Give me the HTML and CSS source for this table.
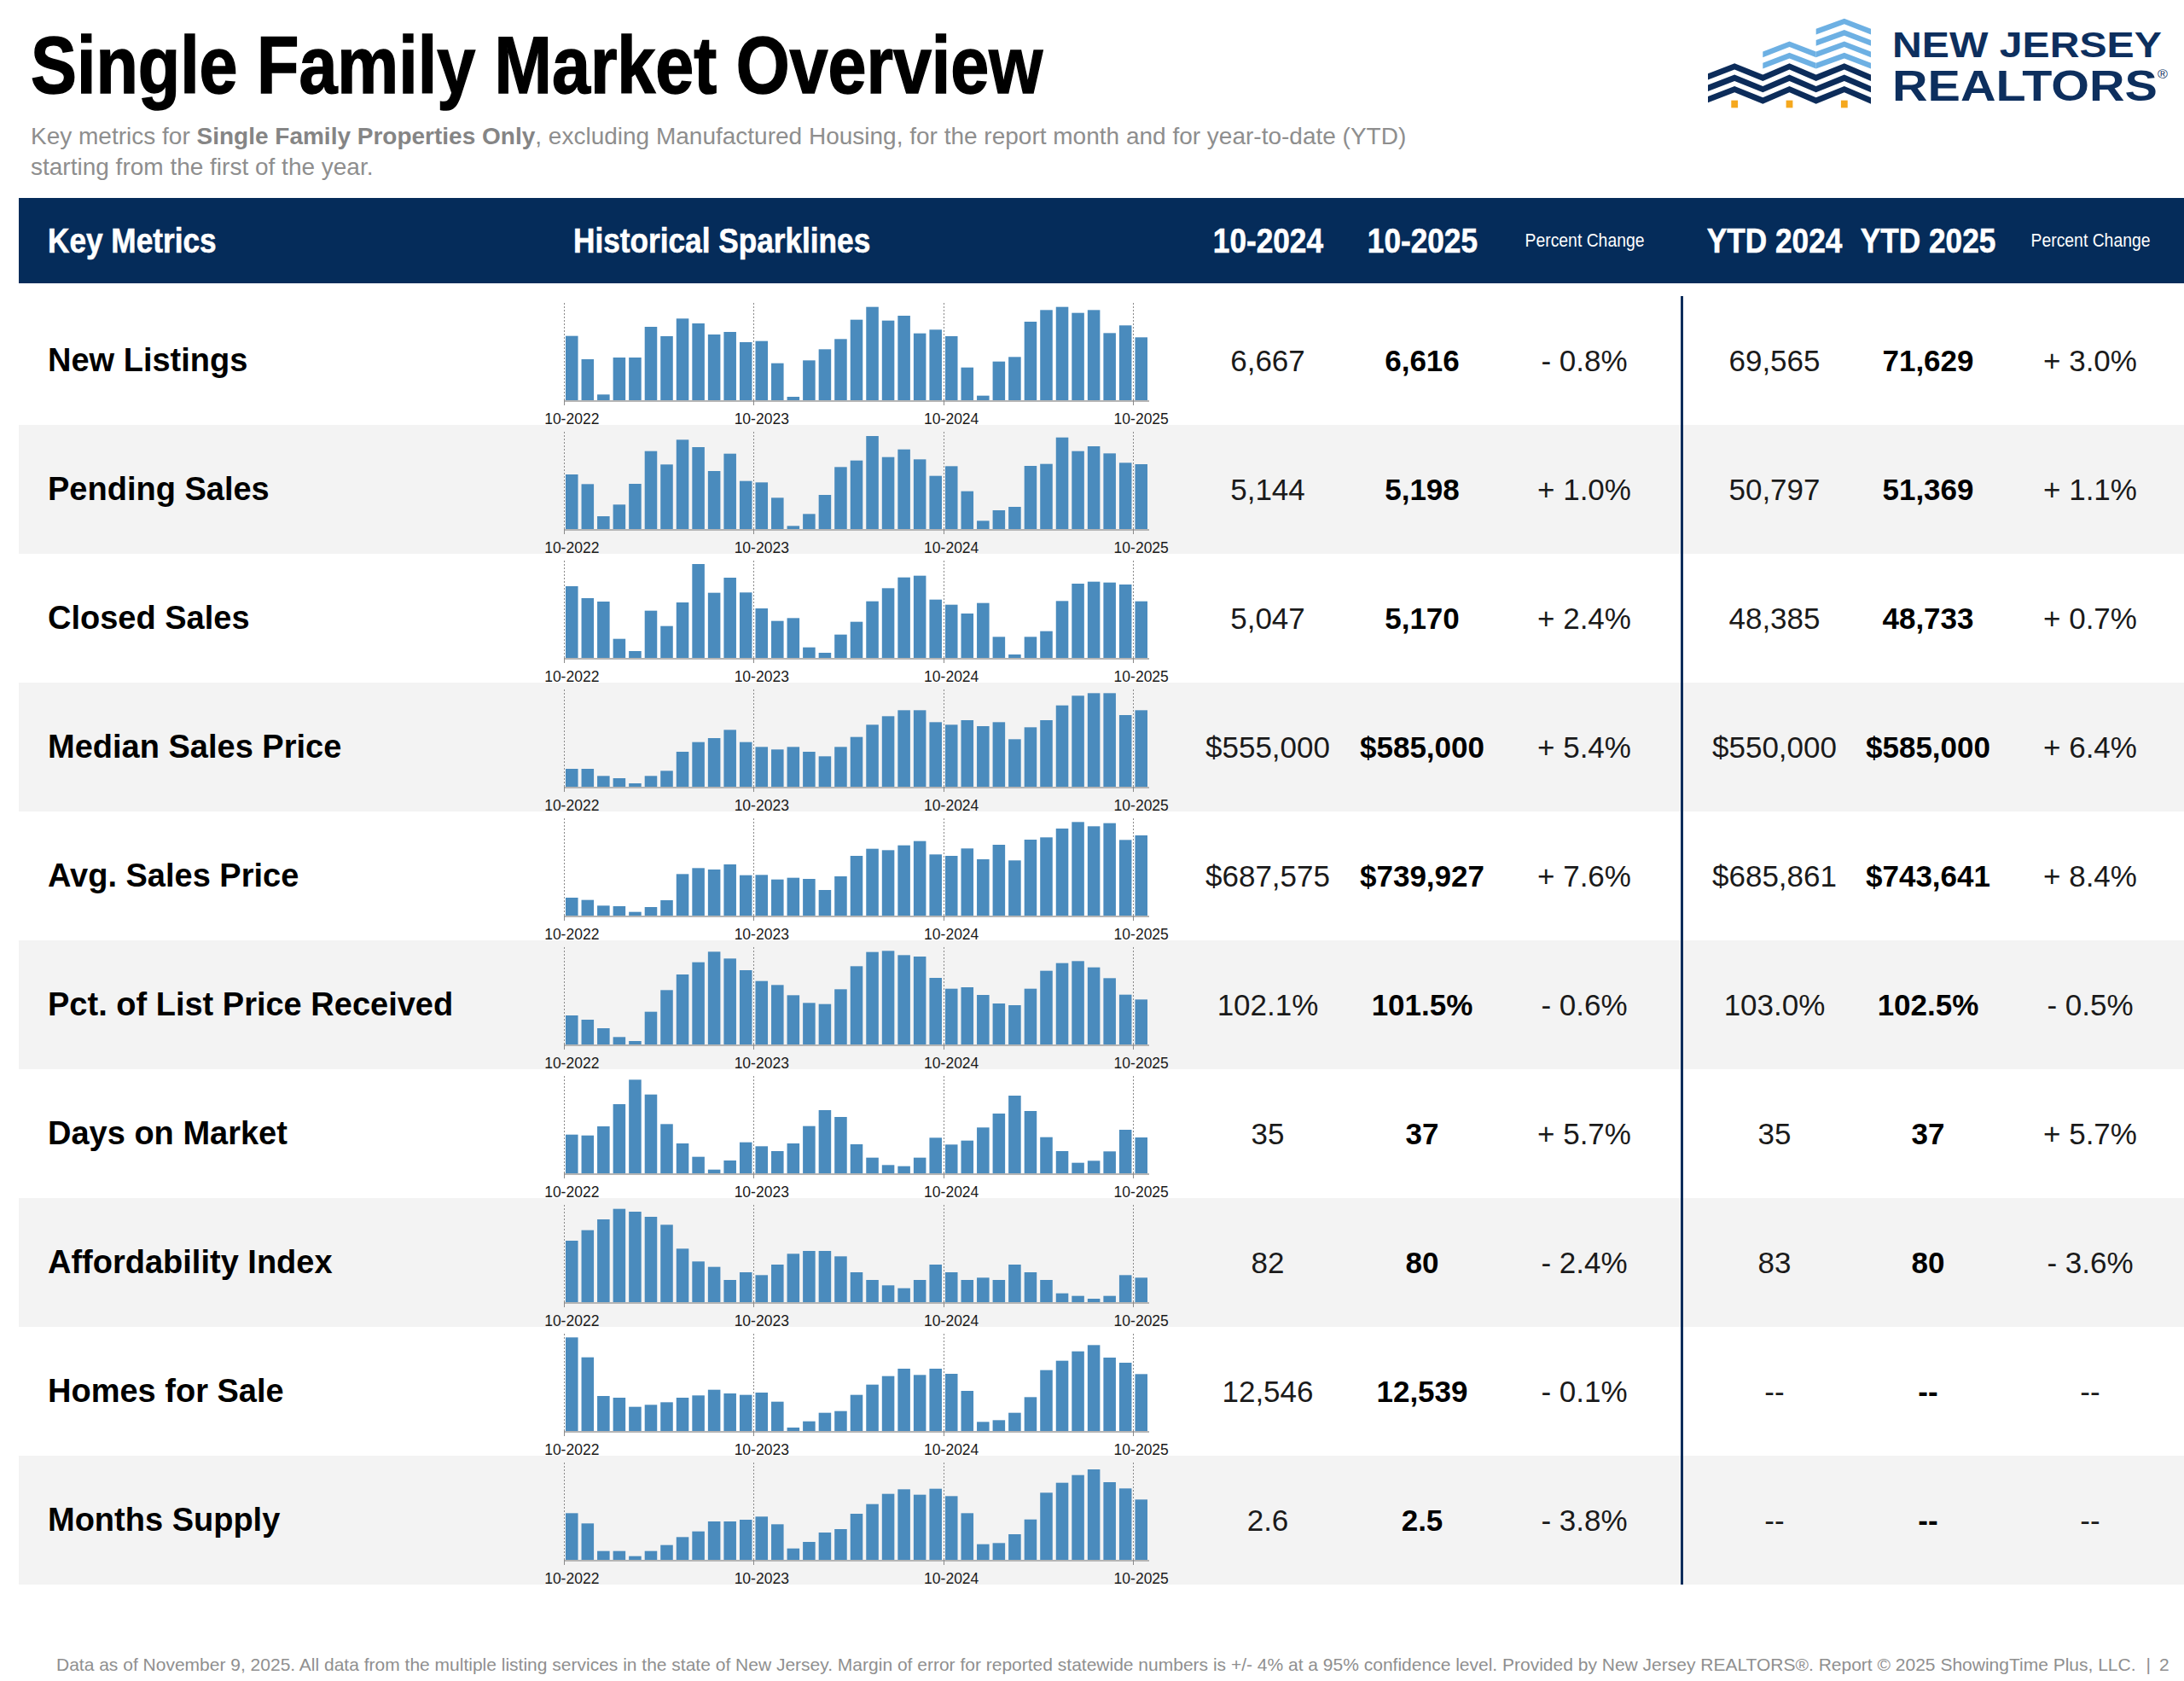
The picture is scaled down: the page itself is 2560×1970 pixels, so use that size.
FILE: index.html
```html
<!DOCTYPE html>
<html lang="en">
<head>
<meta charset="utf-8">
<title>Single Family Market Overview</title>
<link rel="stylesheet" href="styles.css">
</head>
<body>
<header class="top">
  <div class="titles">
    <h1 class="title"><span class="title-text">Single Family Market Overview</span></h1>
    <p class="subtitle">Key metrics for <b>Single Family Properties Only</b>, excluding Manufactured Housing, for the report month and for year-to-date (YTD)<br>starting from the first of the year.</p>
  </div>
  <div class="logo">
    <svg class="logo-mark" viewBox="135 60 490 320" preserveAspectRatio="none" aria-hidden="true">
      <g class="lm-light">
        <polygon points="460,101 545,65 625,101 625,121 545,85 460,121"/>
        <polygon points="460,141 545,105 625,141 625,161 545,125 460,161"/>
        <polygon points="460,181 545,145 625,181 625,201 545,165 460,201"/>
        <polygon points="460,221 545,185 625,221 625,241 545,205 460,241"/>
        <polygon points="300,181 380,145 460,181 460,201 380,165 300,201"/>
        <polygon points="300,221 380,185 460,221 460,241 380,205 300,241"/>
      </g>
      <g class="lm-dark">
        <polygon points="135,258 215,222 300,262 380,222 460,262 545,222 625,262 625,284 545,244 460,284 380,244 300,284 215,244 135,280"/>
        <polygon points="135,298 215,262 300,302 380,262 460,302 545,262 625,302 625,324 545,284 460,324 380,284 300,324 215,284 135,320"/>
        <polygon points="135,338 215,302 300,342 380,302 460,342 545,302 625,342 625,364 545,324 460,364 380,324 300,364 215,324 135,360"/>
      </g>
      <g class="lm-gold">
        <rect x="205" y="352" width="20" height="26"/>
        <rect x="370" y="352" width="20" height="26"/>
        <rect x="535" y="352" width="20" height="26"/>
      </g>
    </svg>
    <div class="logo-text">
      <span class="logo-line1">NEW JERSEY</span>
      <span class="logo-line2">REALTORS<sup class="reg">®</sup></span>
    </div>
  </div>
</header>

<section class="metrics">
  <div class="thead grid">
    <div class="th th-left th-key"><span>Key Metrics</span></div>
    <div class="th th-left th-spark"><span>Historical Sparklines</span></div>
    <div class="th"><span>10-2024</span></div>
    <div class="th"><span>10-2025</span></div>
    <div class="th th-small"><span>Percent Change</span></div>
    <div></div><div></div><div></div>
    <div class="th"><span>YTD 2024</span></div>
    <div class="th"><span>YTD 2025</span></div>
    <div class="th th-small"><span>Percent Change</span></div>
  </div>

  <div class="tbody">
    <div class="row grid">
      <div class="label">New Listings</div>
      <div class="spark" data-values="226,144,20,150,150,258,225,287,270,231,240,204,208,130,12,140,179,215,283,328,280,297,235,248,225,115,16,136,152,276,317,328,307,317,236,263,221"></div>
      <div class="val">6,667</div>
      <div class="val strong">6,616</div>
      <div class="val">- 0.8%</div>
      <div></div><div class="sep"></div><div></div>
      <div class="val">69,565</div>
      <div class="val strong">71,629</div>
      <div class="val">+ 3.0%</div>
    </div>
    <div class="row grid">
      <div class="label">Pending Sales</div>
      <div class="spark" data-values="192,158,45,86,159,274,227,314,288,204,265,169,164,110,11,53,120,218,241,327,253,280,245,187,221,133,29,66,78,222,229,322,274,291,266,233,228"></div>
      <div class="val">5,144</div>
      <div class="val strong">5,198</div>
      <div class="val">+ 1.0%</div>
      <div></div><div class="sep"></div><div></div>
      <div class="val">50,797</div>
      <div class="val strong">51,369</div>
      <div class="val">+ 1.1%</div>
    </div>
    <div class="row grid">
      <div class="label">Closed Sales</div>
      <div class="spark" data-values="252,210,198,67,24,166,112,195,330,229,282,230,174,130,140,37,18,82,127,199,245,283,289,205,187,156,193,74,12,74,94,200,261,268,265,258,199"></div>
      <div class="val">5,047</div>
      <div class="val strong">5,170</div>
      <div class="val">+ 2.4%</div>
      <div></div><div class="sep"></div><div></div>
      <div class="val">48,385</div>
      <div class="val strong">48,733</div>
      <div class="val">+ 0.7%</div>
    </div>
    <div class="row grid">
      <div class="label">Median Sales Price</div>
      <div class="spark" data-values="63,63,38,30,12,38,56,123,157,171,200,157,140,131,140,123,107,140,175,218,248,269,269,227,218,234,213,227,167,209,234,286,320,329,329,252,269"></div>
      <div class="val">$555,000</div>
      <div class="val strong">$585,000</div>
      <div class="val">+ 5.4%</div>
      <div></div><div class="sep"></div><div></div>
      <div class="val">$550,000</div>
      <div class="val strong">$585,000</div>
      <div class="val">+ 6.4%</div>
    </div>
    <div class="row grid">
      <div class="label">Avg. Sales Price</div>
      <div class="spark" data-values="63,55,35,33,13,30,54,146,167,162,180,142,143,127,133,129,90,138,210,235,230,247,262,215,210,236,198,249,194,267,275,306,329,314,325,266,282"></div>
      <div class="val">$687,575</div>
      <div class="val strong">$739,927</div>
      <div class="val">+ 7.6%</div>
      <div></div><div class="sep"></div><div></div>
      <div class="val">$685,861</div>
      <div class="val strong">$743,641</div>
      <div class="val">+ 8.4%</div>
    </div>
    <div class="row grid">
      <div class="label">Pct. of List Price Received</div>
      <div class="spark" data-values="102,87,57,26,12,115,191,246,289,326,302,261,223,209,173,146,142,194,275,325,329,314,309,234,196,201,174,144,138,196,259,286,293,271,233,175,158"></div>
      <div class="val">102.1%</div>
      <div class="val strong">101.5%</div>
      <div class="val">- 0.6%</div>
      <div></div><div class="sep"></div><div></div>
      <div class="val">103.0%</div>
      <div class="val strong">102.5%</div>
      <div class="val">- 0.5%</div>
    </div>
    <div class="row grid">
      <div class="label">Days on Market</div>
      <div class="spark" data-values="136,133,165,243,329,277,173,105,58,13,45,109,95,78,105,166,222,198,102,55,29,25,55,125,101,115,161,210,273,219,127,78,37,44,77,153,126"></div>
      <div class="val">35</div>
      <div class="val strong">37</div>
      <div class="val">+ 5.7%</div>
      <div></div><div class="sep"></div><div></div>
      <div class="val">35</div>
      <div class="val strong">37</div>
      <div class="val">+ 5.7%</div>
    </div>
    <div class="row grid">
      <div class="label">Affordability Index</div>
      <div class="spark" data-values="216,253,291,328,318,300,272,188,143,124,78,105,95,132,170,180,180,161,105,78,59,49,78,132,105,78,86,78,132,105,78,31,22,12,22,95,86"></div>
      <div class="val">82</div>
      <div class="val strong">80</div>
      <div class="val">- 2.4%</div>
      <div></div><div class="sep"></div><div></div>
      <div class="val">83</div>
      <div class="val strong">80</div>
      <div class="val">- 3.6%</div>
    </div>
    <div class="row grid">
      <div class="label">Homes for Sale</div>
      <div class="spark" data-values="329,259,123,117,85,92,101,117,125,145,132,127,135,103,12,34,64,70,127,163,193,219,197,219,201,141,32,38,64,119,214,247,280,302,258,240,200"></div>
      <div class="val">12,546</div>
      <div class="val strong">12,539</div>
      <div class="val">- 0.1%</div>
      <div></div><div class="sep"></div><div></div>
      <div class="val">--</div>
      <div class="val strong">--</div>
      <div class="val">--</div>
    </div>
    <div class="row grid">
      <div class="label">Months Supply</div>
      <div class="spark" data-values="164,128,31,31,13,31,52,80,100,135,135,141,152,125,40,63,96,108,162,196,232,248,229,250,224,164,55,59,90,142,236,271,298,318,273,251,212"></div>
      <div class="val">2.6</div>
      <div class="val strong">2.5</div>
      <div class="val">- 3.8%</div>
      <div></div><div class="sep"></div><div></div>
      <div class="val">--</div>
      <div class="val strong">--</div>
      <div class="val">--</div>
    </div>
  </div>
</section>

<footer class="footer">Data as of November 9, 2025. All data from the multiple listing services in the state of New Jersey. Margin of error for reported statewide numbers is +/- 4% at a 95% confidence level. Provided by New Jersey REALTORS®. Report © 2025 ShowingTime Plus, LLC.<span class="pipe">|</span>2</footer>

<script src="script.js"></script>
</body>
</html>
```

FILE: styles.css
```css
* { box-sizing: border-box; }
html, body { margin: 0; padding: 0; }
body {
  width: 2560px;
  height: 1970px;
  overflow: hidden;
  background: #ffffff;
  font-family: "Liberation Sans", Arial, Helvetica, sans-serif;
  color: #111111;
}

/* ---------- top band ---------- */
.top {
  display: flex;
  justify-content: space-between;
  align-items: flex-start;
  height: 232px;
  padding-left: 36px;
}
.title {
  margin: 0;
  padding-top: 30px;
  font-size: 94px;
  line-height: 94px;
  font-weight: 700;
  color: #000000;
  white-space: nowrap;
  -webkit-text-stroke: 1.5px #000000;
}
.title-text {
  display: inline-block;
  transform: scaleX(0.86);
  transform-origin: left center;
}
.subtitle {
  margin: 18px 0 0;
  font-size: 28px;
  line-height: 36px;
  color: #8e8e8e;
  white-space: nowrap;
}
.subtitle b { color: #858585; font-weight: 700; }

.logo {
  display: flex;
  align-items: flex-start;
  gap: 25px;
  padding-top: 20px;
  margin-right: 10px;
}
.logo-mark { display: block; width: 191px; height: 107px; }
.lm-light polygon { fill: #6db0e3; }
.lm-dark polygon { fill: #0c2c5a; }
.lm-gold rect { fill: #f5a81e; }
.logo-text {
  width: 332px;
  margin-top: 11px;
  color: #0d2f5e;
  font-weight: 700;
  white-space: nowrap;
}
.logo-line1 {
  display: block;
  font-size: 43px;
  line-height: 43px;
  transform: scaleX(1.12);
  transform-origin: left center;
}
.logo-line2 {
  display: block;
  margin-top: 2px;
  font-size: 50px;
  line-height: 50px;
  transform: scaleX(1.15);
  transform-origin: left center;
}
.reg {
  font-size: 14px;
  font-weight: 400;
  vertical-align: 26px;
  line-height: 0;
}

/* ---------- table ---------- */
.metrics { margin-left: 22px; }
.grid {
  display: grid;
  grid-template-columns: 618px 756px 180px 182px 198px 14px 3px 7px 200px 160px 220px;
  align-items: center;
}
.thead {
  height: 100px;
  background: #052c5a;
  color: #ffffff;
}
.th {
  justify-self: center;
  font-size: 40px;
  font-weight: 700;
  white-space: nowrap;
  -webkit-text-stroke: 0.6px #ffffff;
}
.th span { display: inline-block; transform: scaleX(0.88); }
.th-left { justify-self: start; }
.th-left span { transform-origin: left center; }
.th-key { padding-left: 34px; }
.th-spark { padding-left: 32px; }
.th-small { font-size: 22px; font-weight: 400; -webkit-text-stroke: 0; }

.tbody { padding-top: 15px; }
.row { height: 151px; }
.row:nth-child(even) { background: #f3f3f3; }
.label {
  padding-left: 34px;
  font-size: 38px;
  font-weight: 700;
  color: #000000;
  white-space: nowrap;
}
.val {
  justify-self: center;
  font-size: 35px;
  color: #1a1a1a;
  white-space: nowrap;
}
.val.strong { font-weight: 700; color: #000000; }
.sep { align-self: stretch; background: #0d2d5b; }
.spark { align-self: stretch; }
.spark svg { display: block; overflow: visible; }
.bar { fill: #4a8bbd; }
.axis { stroke: #b5b5b5; stroke-width: 2; }
.divider { stroke: #8a8a8a; stroke-width: 1; stroke-dasharray: 2 2; }
.tick { stroke: #8a8a8a; stroke-width: 1; }
.tick-label {
  font-family: "Liberation Sans", Arial, sans-serif;
  font-size: 17.5px;
  fill: #1a1a1a;
}

/* ---------- footer ---------- */
.footer {
  padding: 82px 0 0 66px;
  font-size: 21px;
  line-height: 24px;
  color: #8f8f8f;
  white-space: nowrap;
}
.pipe { margin: 0 10px 0 12px; }
```

FILE: script.js
```js
(function () {
  var NS = 'http://www.w3.org/2000/svg';
  var X0 = 21, SLOT = 686 / 37, BASE = 122, TOP = 8, SCALE = 1 / 3;
  var LABELS = ['10-2022', '10-2023', '10-2024', '10-2025'];

  function mk(tag, attrs) {
    var e = document.createElementNS(NS, tag);
    for (var k in attrs) { e.setAttribute(k, attrs[k]); }
    return e;
  }

  var sparks = document.querySelectorAll('.spark');
  for (var n = 0; n < sparks.length; n++) {
    var el = sparks[n];
    var vals = el.getAttribute('data-values').split(',').map(Number);
    var svg = mk('svg', { width: 756, height: 151, viewBox: '0 0 756 151' });
    svg.appendChild(mk('line', { x1: X0, y1: BASE + 1, x2: (X0 + 37 * SLOT).toFixed(2), y2: BASE + 1, 'class': 'axis' }));
    for (var i = 0; i < vals.length; i++) {
      var h = vals[i] * SCALE;
      svg.appendChild(mk('rect', {
        x: (X0 + i * SLOT + 2).toFixed(2),
        y: (BASE - h).toFixed(2),
        width: (SLOT - 4).toFixed(2),
        height: h.toFixed(2),
        'class': 'bar'
      }));
    }
    for (var k = 0; k < 4; k++) {
      var s = k * 12;
      var x = Math.round(X0 + s * SLOT) + 0.5;
      svg.appendChild(mk('line', { x1: x, y1: TOP, x2: x, y2: BASE, 'class': 'divider' }));
      svg.appendChild(mk('line', { x1: x, y1: BASE, x2: x, y2: BASE + 6, 'class': 'tick' }));
      var t = mk('text', { x: (X0 + s * SLOT + SLOT / 2).toFixed(2), y: 150, 'text-anchor': 'middle', 'class': 'tick-label' });
      t.textContent = LABELS[k];
      svg.appendChild(t);
    }
    el.appendChild(svg);
  }
})();
```
